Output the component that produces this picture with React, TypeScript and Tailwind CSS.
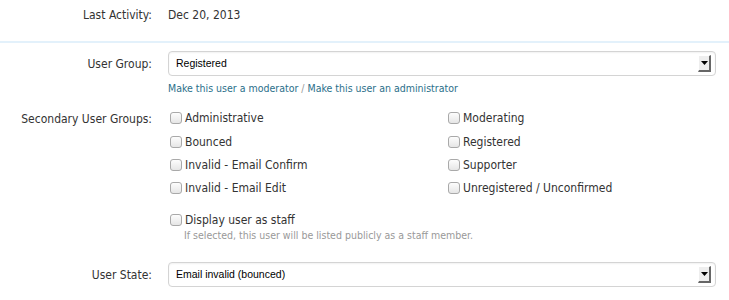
const primary = ["Administrative", "Bounced", "Invalid - Email Confirm", "Invalid - Email Edit"];
const secondary = ["Moderating", "Registered", "Supporter", "Unregistered / Unconfirmed"];

function Box() {
  return (
    <span className="inline-block w-[12px] h-[12px] rounded-[3px] border border-[#a9a9a9] bg-gradient-to-b from-[#fdfdfd] to-[#e6e6e6] shrink-0" />
  );
}

function Check({ label }: { label: string }) {
  return (
    <label className="flex items-center gap-[3px] h-[23.3px] text-[#333]">
      <Box />
      <span>{label}</span>
    </label>
  );
}

function Select({ value }: { value: string }) {
  return (
    <div className="flex items-center h-[25px] w-[548px] rounded-[4px] border border-[#d4d4d4] bg-white shadow-[inset_0_1px_2px_rgba(0,0,0,0.06)] pl-[7px] pr-[4px]">
      <span className="flex-1 text-[10.5px] text-black font-['Liberation_Sans',sans-serif]">{value}</span>
      <span className="flex items-center justify-center w-[13px] h-[17px] bg-[#eeeeee] border-r-2 border-b-2 border-[#666] border-l border-t border-l-white border-t-white">
        <svg width="7" height="4" viewBox="0 0 7 4"><path d="M0 0h7L3.5 4z" fill="#000" /></svg>
      </span>
    </div>
  );
}

export default function App() {
  return (
    <div className="w-[729px] h-[300px] bg-white overflow-hidden font-['DejaVu_Sans_Condensed','DejaVu_Sans',sans-serif] text-[12px] text-[#333]">
      <div className="flex items-center h-[30px]">
        <div className="w-[152px] text-right">Last Activity:</div>
        <div className="ml-[16px]">Dec 20, 2013</div>
      </div>
      <div className="mt-[11px] border-t-2 border-[#e3f1fb]" />

      <div className="flex mt-[8px]">
        <div className="w-[152px] text-right pt-[4px]">User Group:</div>
        <div className="ml-[16px]">
          <Select value="Registered" />
          <div className="mt-[5px] text-[10.5px] text-[#2b6f8a]">
            <span>Make this user a moderator</span>
            <span className="text-[#999]"> / </span>
            <span>Make this user an administrator</span>
          </div>
        </div>
      </div>

      <div className="flex mt-[10px]">
        <div className="w-[152px] text-right pt-[3px]">Secondary User Groups:</div>
        <div className="ml-[16px] pl-[2px]">
          <div className="grid grid-cols-[278px_1fr]">
            <div>
              {primary.map((g) => <Check key={g} label={g} />)}
            </div>
            <div>
              {secondary.map((g) => <Check key={g} label={g} />)}
            </div>
          </div>
          <div className="mt-[8px]">
            <Check label="Display user as staff" />
            <div className="pl-[14px] -mt-[3px] text-[10.5px] text-[#999]">If selected, this user will be listed publicly as a staff member.</div>
          </div>
        </div>
      </div>

      <div className="flex mt-[18px]">
        <div className="w-[152px] text-right pt-[4px]">User State:</div>
        <div className="ml-[16px]">
          <Select value="Email invalid (bounced)" />
        </div>
      </div>
    </div>
  );
}
